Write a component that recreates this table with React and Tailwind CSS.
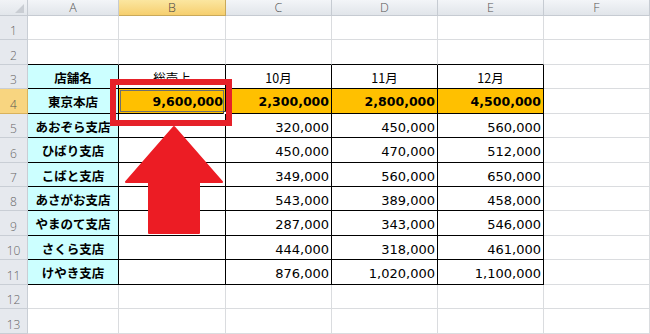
import React from "react";

const colW = [28, 91, 107, 106, 106, 106, 106];
const rowH = [24, 25, 24, 25, 24, 25, 24, 24, 25, 24, 25, 24, 25];
const letters = ["A", "B", "C", "D", "E", "F"];

const stores = [
  ["あおぞら支店", "320,000", "450,000", "560,000"],
  ["ひばり支店", "450,000", "470,000", "512,000"],
  ["こばと支店", "349,000", "560,000", "650,000"],
  ["あさがお支店", "543,000", "389,000", "458,000"],
  ["やまのて支店", "287,000", "343,000", "546,000"],
  ["さくら支店", "444,000", "318,000", "461,000"],
  ["けやき支店", "876,000", "1,020,000", "1,100,000"],
];

const jp = { fontFamily: '"Noto Sans CJK JP", "Noto Sans", sans-serif' };
const num = { fontFamily: '"DejaVu Sans", "Liberation Sans", sans-serif' };
const hdr = { fontFamily: '"Open Sans", "Noto Sans", sans-serif' };

function cellContent(r, c) {
  if (r === 3) {
    if (c === 0) return { text: "店舗名", bold: true, align: "center", font: jp };
    if (c === 1) return { text: "総売上", align: "center", font: jp };
    if (c >= 2 && c <= 4) return { text: `${c + 8}月`, align: "center", font: jp };
  }
  if (r === 4) {
    const vals = ["東京本店", "9,600,000", "2,300,000", "2,800,000", "4,500,000"];
    if (c <= 4)
      return { text: vals[c], bold: true, align: c === 0 ? "center" : "right", font: c === 0 ? jp : num };
  }
  if (r >= 5 && r <= 11) {
    const s = stores[r - 5];
    if (c === 0) return { text: s[0], bold: true, align: "center", font: jp };
    if (c >= 2 && c <= 4) return { text: s[c - 1], align: "right", font: num };
  }
  return null;
}

export default function App() {
  const inTable = (r, c) => r >= 3 && r <= 11 && c <= 4;
  return (
    <div className="relative w-[650px] h-[334px] overflow-hidden bg-white">
      <div className="flex h-[16px]">
        <div className="w-[28px] h-full bg-gradient-to-b from-[#f1f3f6] to-[#e2e6eb] border-r border-b border-[#c6cbd2] flex items-end justify-end pr-[3px] pb-[2px]">
          <div className="w-0 h-0 border-l-[9px] border-l-transparent border-b-[9px] border-b-[#c9cdd3]" />
        </div>
        {letters.map((l, i) => (
          <div
            key={l}
            style={{ width: colW[i + 1], ...hdr }}
            className={`h-full border-r border-b flex items-center justify-center text-[12.5px] leading-[15px] font-light ${
              i === 1
                ? "bg-gradient-to-b from-[#fbe6a0] to-[#f6cf6e] border-[#c9a95a] text-[#444]"
                : "bg-gradient-to-b from-[#f3f5f8] to-[#e1e5ea] border-[#c6cbd2] text-[#555]"
            }`}
          >
            {l}
          </div>
        ))}
      </div>
      {rowH.map((h, ri) => {
        const r = ri + 1;
        return (
          <div key={r} className="flex" style={{ height: h }}>
            <div
              style={hdr}
              className={`w-[28px] h-full border-r border-b flex items-end justify-center pb-[1px] text-[12px] leading-[14px] font-light ${
                r === 4
                  ? "bg-[#f8d580] border-[#d9b25c] text-[#555]"
                  : "bg-[#e6e9ee] border-[#c9ced5] text-[#666]"
              }`}
            >
              {r}
            </div>
            {letters.map((l, c) => {
              const t = inTable(r, c);
              const content = cellContent(r, c);
              const bg = t && c === 0 ? "bg-[#ccffff]" : r === 4 && t ? "bg-[#ffc000]" : "bg-white";
              const br = t ? "border-r-black" : "border-r-[#dadcdf]";
              const bb = t || (r === 2 && c <= 4) ? "border-b-black" : "border-b-[#dadcdf]";
              return (
                <div
                  key={l}
                  style={{ width: colW[c + 1] }}
                  className={`relative h-full border-r border-b ${br} ${bb} ${bg} flex items-center ${
                    content && content.align === "right" ? "justify-end pr-[2px]" : "justify-center"
                  }`}
                >
                  {content && (
                    <span
                      style={content.font}
                      className={`${content.font === num && !content.bold ? "text-[13px]" : "text-[12.5px]"} leading-none pt-[3px] text-black ${
                        content.bold ? "font-bold" : "font-normal"
                      }`}
                    >
                      {content.text}
                    </span>
                  )}
                  {r === 4 && c === 1 && (
                    <>
                      <div className="absolute inset-[1px] border-[1.5px] border-[#707070]" />
                      <div className="absolute right-[-3px] bottom-[-3px] w-[5px] h-[5px] bg-white border border-[#444]" />
                    </>
                  )}
                </div>
              );
            })}
          </div>
        );
      })}
      <div className="absolute left-[110px] top-[79px] w-[122px] h-[47px] border-[6px] border-[#e62129]" />
      <svg className="absolute left-[124px] top-[125px]" width="100" height="110" viewBox="0 0 100 110">
        <polygon points="50,2 98,57 75,57 75,108 25,108 25,57 2,57" fill="#ec1c24" strokeLinejoin="round" stroke="#ec1c24" strokeWidth="2" />
      </svg>
    </div>
  );
}
